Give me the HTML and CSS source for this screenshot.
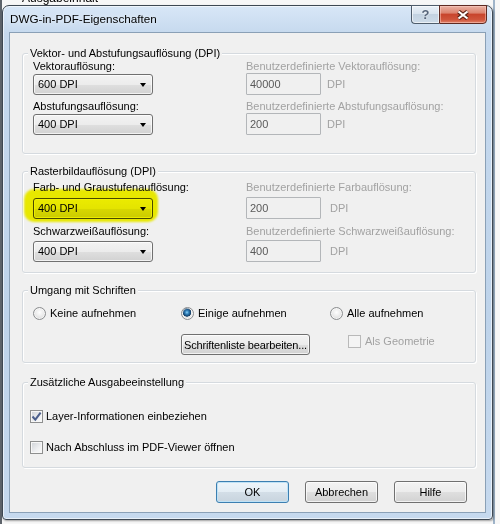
FILE: index.html
```html
<!DOCTYPE html>
<html lang="de">
<head>
<meta charset="utf-8">
<title>DWG-in-PDF-Eigenschaften</title>
<link rel="stylesheet" href="styles.css">
</head>
<body>
<div class="desktop">
  <div class="behind"><span>Ausgabeinhalt</span></div>
  <div class="window">
    <div class="titlebar">
      <span class="title">DWG-in-PDF-Eigenschaften</span>
      <div class="caption-buttons">
        <span class="cbtn help">?</span>
        <span class="cbtn close"><svg width="14" height="10" viewBox="0 0 14 10"><path class="x-out" d="M2.5 1.5 11.5 8.5M11.5 1.5 2.5 8.5"/><path class="x-in" d="M2.5 1.5 11.5 8.5M11.5 1.5 2.5 8.5"/></svg></span>
      </div>
    </div>
    <div class="client">
      <div class="group g1">
        <div class="group-title">Vektor- und Abstufungsauflösung (DPI)</div>
        <div class="grid">
          <span class="lbl">Vektorauflösung:</span>
          <span class="lbl dis">Benutzerdefinierte Vektorauflösung:</span>
          <div class="combo"><span>600 DPI</span><span class="arrow"></span></div>
          <div class="custom"><span class="edit">40000</span><span class="unit">DPI</span></div>
          <span class="lbl">Abstufungsauflösung:</span>
          <span class="lbl dis">Benutzerdefinierte Abstufungsauflösung:</span>
          <div class="combo"><span>400 DPI</span><span class="arrow"></span></div>
          <div class="custom"><span class="edit">200</span><span class="unit">DPI</span></div>
        </div>
      </div>

      <div class="group g2">
        <div class="group-title">Rasterbildauflösung (DPI)</div>
        <div class="grid">
          <span class="lbl">Farb- und Graustufenauflösung:</span>
          <span class="lbl dis">Benutzerdefinierte Farbauflösung:</span>
          <div class="marker"><div class="combo hl"><span>400 DPI</span><span class="arrow"></span></div></div>
          <div class="custom"><span class="edit">200</span><span class="unit wide">DPI</span></div>
          <span class="lbl">Schwarzweißauflösung:</span>
          <span class="lbl dis">Benutzerdefinierte Schwarzweißauflösung:</span>
          <div class="combo"><span>400 DPI</span><span class="arrow"></span></div>
          <div class="custom"><span class="edit">400</span><span class="unit wide">DPI</span></div>
        </div>
      </div>

      <div class="group g3">
        <div class="group-title">Umgang mit Schriften</div>
        <div class="grid3">
          <span class="opt"><span class="radio"></span>Keine aufnehmen</span>
          <span class="opt"><span class="radio on"></span>Einige aufnehmen</span>
          <span class="opt"><span class="radio"></span>Alle aufnehmen</span>
          <span class="spacer"></span>
          <button class="btn fonts">Schriftenliste bearbeiten...</button>
          <span class="opt dis geo"><span class="check disabled"></span>Als Geometrie</span>
        </div>
      </div>

      <div class="group g4">
        <div class="group-title">Zusätzliche Ausgabeeinstellung</div>
        <div class="checks">
          <span class="opt"><span class="check on"><svg width="11" height="11" viewBox="0 0 11 11"><path d="M1.5 5.5 4.3 8.6 9.6 1.6" /></svg></span>Layer-Informationen einbeziehen</span>
          <span class="opt"><span class="check"></span>Nach Abschluss im PDF-Viewer öffnen</span>
        </div>
      </div>

      <div class="actions">
        <button class="btn default">OK</button>
        <button class="btn">Abbrechen</button>
        <button class="btn">Hilfe</button>
      </div>
    </div>
  </div>
</div>
</body>
</html>
```

FILE: styles.css
```css
* { box-sizing: border-box; }
html, body { margin: 0; padding: 0; }
body {
  width: 500px;
  height: 524px;
  overflow: hidden;
  font-family: "Liberation Sans", Arial, sans-serif;
  font-size: 11px;
  color: #000;
  background: #fafafa;
}
.desktop {
  height: 524px;
  background:
    linear-gradient(90deg, #5d636a 0, #5d636a 2px, transparent 2px, transparent 493px, #9fb4c9 493px, #9fb4c9 495px, transparent 495px),
    #f7f7f7;
}
.behind {
  height: 5px;
  overflow: hidden;
  padding-left: 22px;
  font-size: 12px;
  line-height: 12px;
}
.behind span { display: block; margin-top: -8px; }

.window {
  margin: 0 7px 0 2px;
  height: 515px;
  border: 1px solid #3e4853;
  border-radius: 7px 7px 4px 4px;
  background: linear-gradient(180deg, #d8e7f7 0, #c6d9ee 27px, #bed3ea 60%, #c6d9ee 100%);
  box-shadow: inset 0 0 0 1px rgba(255, 255, 255, 0.6), 1px 1px 2px rgba(0, 0, 0, 0.35);
  display: flex;
  flex-direction: column;
}
.titlebar {
  height: 26px;
  flex: none;
  display: flex;
  justify-content: space-between;
  align-items: flex-start;
  padding-left: 7px;
}
.title {
  font-size: 11.7px;
  line-height: 26px;
  color: #000;
  text-shadow: 0 0 6px rgba(255, 255, 255, 0.9);
}
.caption-buttons {
  display: flex;
  margin-top: -1px;
  margin-right: 5px;
}
.cbtn {
  height: 19px;
  display: flex;
  align-items: center;
  justify-content: center;
  border: 1px solid #4f5d6c;
}
.help {
  width: 28px;
  border-right: none;
  border-radius: 0 0 0 4px;
  background: linear-gradient(180deg, #eaf1f8 0, #d8e3ee 45%, #c3d2e1 50%, #cddbe8 100%);
  box-shadow: inset 0 0 0 1px rgba(255, 255, 255, 0.6);
  font-size: 13px;
  font-weight: bold;
  color: #56657a;
  text-shadow: 0 0 2px #fff;
}
.close {
  width: 48px;
  border-color: #5e2a22;
  border-radius: 0 0 4px 0;
  background: linear-gradient(180deg, #eab2a4 0, #dc8470 40%, #c8452d 50%, #cf553c 80%, #e0826a 100%);
  box-shadow: inset 0 0 0 1px rgba(255, 210, 200, 0.5);
}
.close svg { display: block; }
.x-out { stroke: #5b2418; stroke-width: 4.2; fill: none; }
.x-in { stroke: #fff; stroke-width: 2.2; fill: none; }

.client {
  flex: 1;
  margin: 0 6px 6px 6px;
  background: #f0f0f0;
  border: 1px solid #8aa0b6;
  padding: 20px 9px 0 12px;
  display: flex;
  flex-direction: column;
}

.group {
  border: 1px solid #d5dadf;
  border-radius: 3px;
  box-shadow: inset 1px 1px 0 #fff, 1px 1px 0 #fff;
}
.group-title {
  display: table;
  margin: -8px 0 0 5px;
  padding: 0 2px;
  line-height: 14px;
  background: #f0f0f0;
}
.grid {
  display: grid;
  grid-template-columns: 213px 1fr;
  align-items: end;
}
.g1 .grid {
  padding: 0 0 18px 10px;
  grid-template-rows: 13px 22px 18px 22px;
}
.g2 { margin-top: 17px; }
.g2 .grid {
  padding: 0 0 10px 10px;
  grid-template-rows: 16px 25px 19px 24px;
}
.lbl {
  line-height: 13px;
  white-space: nowrap;
}
.dis { color: #a2a2a2; }

.combo {
  width: 120px;
  height: 21px;
  border: 1px solid #707070;
  border-radius: 3px;
  background: linear-gradient(180deg, #f3f3f3 0, #ececec 50%, #dfdfdf 51%, #d2d2d2 100%);
  box-shadow: inset 0 0 0 1px rgba(255, 255, 255, 0.7);
  display: flex;
  align-items: center;
  justify-content: space-between;
  padding: 0 6px 0 4px;
  line-height: 19px;
}
.arrow {
  width: 0;
  height: 0;
  border-top: 4px solid #000;
  border-left: 3.5px solid transparent;
  border-right: 3.5px solid transparent;
}
.marker {
  position: relative;
  width: 120px;
}
.marker::after {
  content: "";
  position: absolute;
  left: -9px;
  right: -5px;
  top: -9px;
  bottom: -3px;
  background: #f7f700;
  mix-blend-mode: multiply;
  border-radius: 10px;
  filter: blur(1px);
}
.combo.hl { border-color: #4b4b30; }

.custom {
  display: flex;
  align-items: center;
}
.edit {
  width: 75px;
  height: 22px;
  border: 1px solid #b3b6b9;
  border-radius: 1px;
  background: #f0f0f0;
  color: #5a5a5a;
  line-height: 20px;
  padding-left: 3px;
}
.unit {
  margin-left: 6px;
  color: #a2a2a2;
}
.unit.wide { margin-left: 9px; }

.g3 { margin-top: 17px; }
.grid3 {
  display: grid;
  grid-template-columns: 148px 149px 1fr;
  grid-template-rows: 23px 35px;
  align-items: end;
  padding: 0 0 7px 10px;
}
.opt {
  display: flex;
  align-items: center;
  gap: 4px;
  line-height: 14px;
  white-space: nowrap;
}
.radio {
  width: 13px;
  height: 13px;
  flex: none;
  border-radius: 50%;
  border: 1px solid #8b8d8f;
  background: radial-gradient(circle at 50% 40%, #fefefe 0, #ececec 45%, #d0d0d0 100%);
  box-shadow: inset 0 0 0 1px rgba(255, 255, 255, 0.6);
}
.radio.on {
  background:
    radial-gradient(circle at 45% 40%, #8fd3f5 0, #3d8dc6 1.5px, #1b5a8e 3px, #193f63 4px, transparent 4.5px),
    radial-gradient(circle at 50% 40%, #fefefe 0, #ececec 45%, #d0d0d0 100%);
}
.geo {
  margin: 0 0 7px 18px;
  align-self: end;
}
.check {
  width: 13px;
  height: 13px;
  flex: none;
  border: 1px solid #8e8f8f;
  background: linear-gradient(135deg, #cdd1d6 0, #eeeff1 60%, #fbfbfb 100%);
  box-shadow: inset 0 0 0 1px #f7f7f7;
  display: flex;
  align-items: center;
  justify-content: center;
}
.check svg { display: block; }
.check path { stroke: #4c5f8c; stroke-width: 2; fill: none; }
.check.disabled {
  border-color: #b9b9b9;
  background: #f4f4f4;
  box-shadow: none;
}

.g4 { margin-top: 19px; }
.checks {
  display: flex;
  flex-direction: column;
  gap: 17px;
  padding: 20px 0 13px 7px;
}
.checks .opt { gap: 3px; }

.btn {
  font: inherit;
  font-family: "Liberation Sans", Arial, sans-serif;
  font-size: 11px;
  color: #000;
  height: 21px;
  padding: 0;
  white-space: nowrap;
  border: 1px solid #707070;
  border-radius: 3px;
  background: linear-gradient(180deg, #f3f3f3 0, #ececec 50%, #dfdfdf 51%, #d2d2d2 100%);
  box-shadow: inset 0 0 0 1px rgba(255, 255, 255, 0.7);
}
.btn.fonts {
  width: 129px;
  letter-spacing: -0.15px;
}
.actions {
  display: flex;
  justify-content: flex-end;
  gap: 16px;
  margin-top: 13px;
  padding-right: 9px;
}
.actions .btn {
  width: 73px;
  height: 22px;
}
.btn.default {
  border-color: #3c7fb1;
  background: linear-gradient(180deg, #eef5fa 0, #e3edf4 50%, #d3dee7 51%, #c8d4de 100%);
  box-shadow: inset 0 0 0 1px #bfe2f6;
}
```
